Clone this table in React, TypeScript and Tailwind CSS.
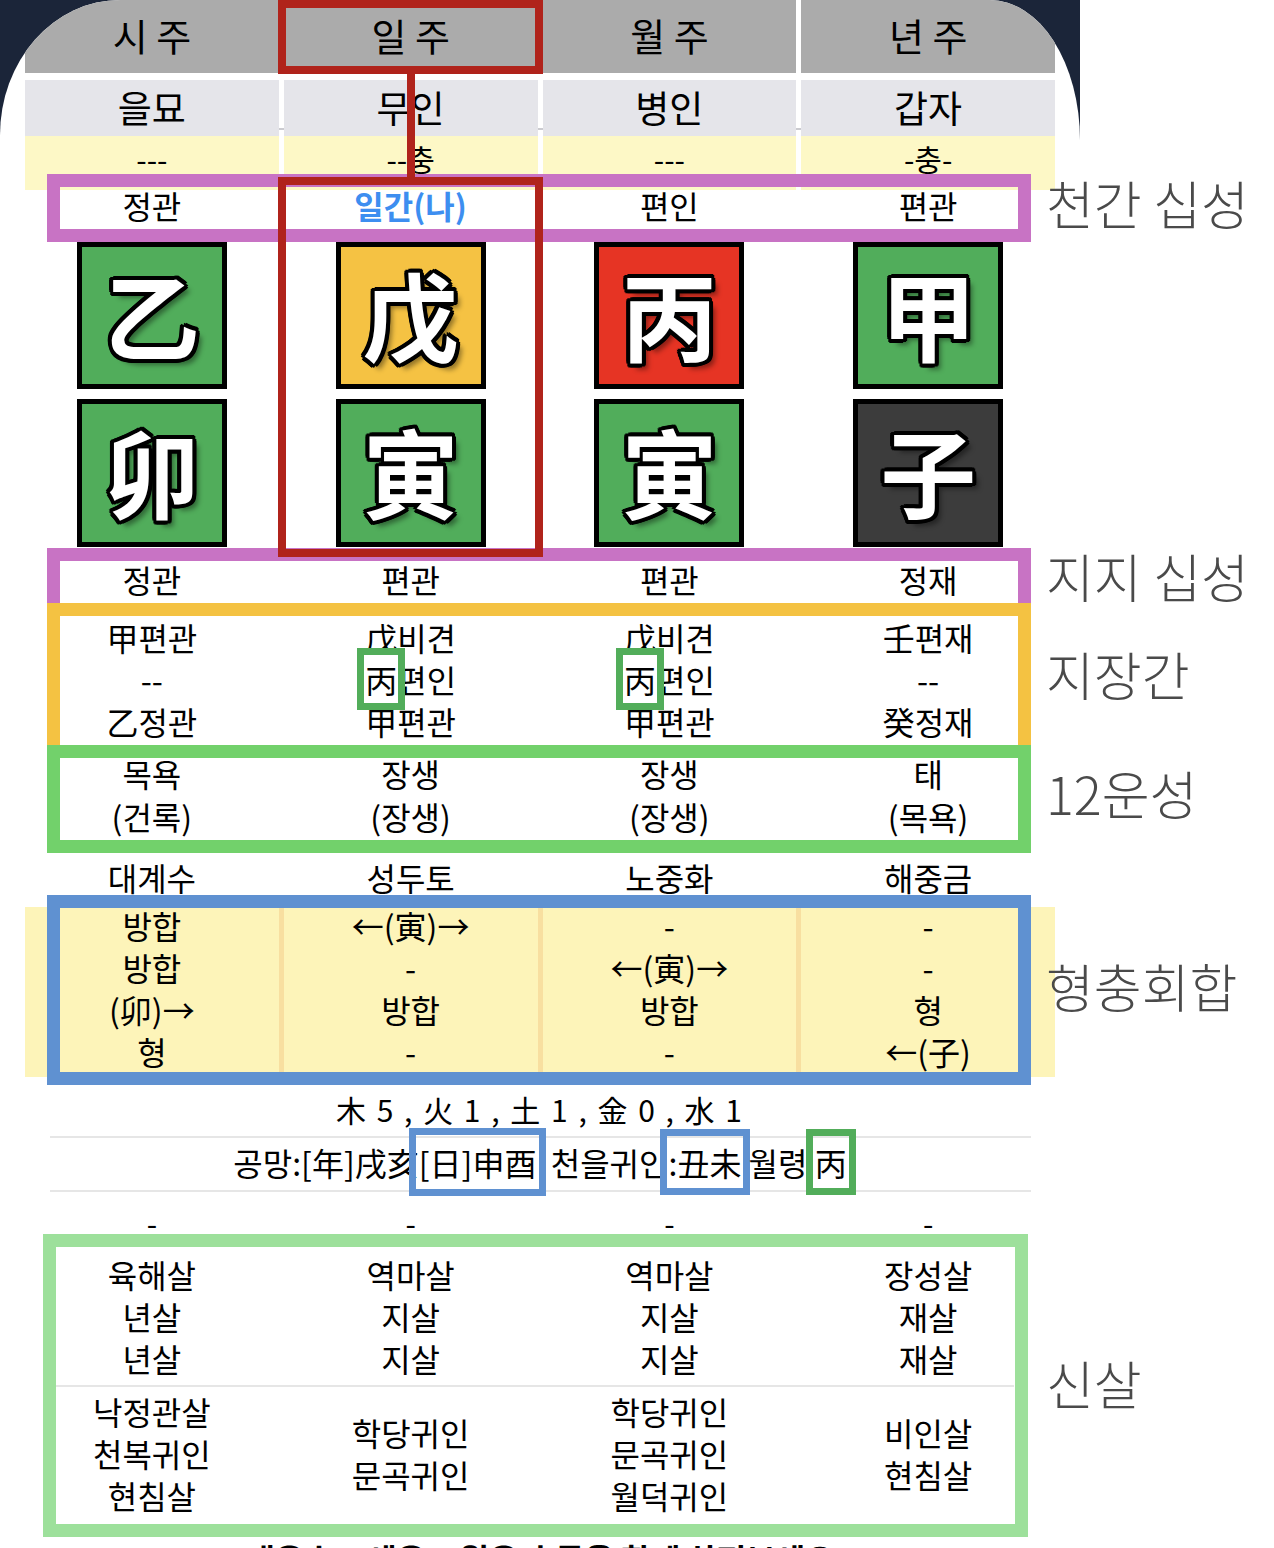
import React from 'react';

const headers = ['시 주', '일 주', '월 주', '년 주'];
const names = ['을묘', '무인', '병인', '갑자'];
const clashes = ['---', '--충', '---', '-충-'];
const stemTen = ['정관', '일간(나)', '편인', '편관'];
const stems = [
  { ch: '乙', bg: 'bg-[#51ad5b]' },
  { ch: '戊', bg: 'bg-[#f5c243]' },
  { ch: '丙', bg: 'bg-[#e63424]' },
  { ch: '甲', bg: 'bg-[#51ad5b]' },
];
const branches = [
  { ch: '卯', bg: 'bg-[#51ad5b]' },
  { ch: '寅', bg: 'bg-[#51ad5b]' },
  { ch: '寅', bg: 'bg-[#51ad5b]' },
  { ch: '子', bg: 'bg-[#3c3c3c]' },
];
const branchTen = ['정관', '편관', '편관', '정재'];
const twelve = [
  ['목욕', '(건록)'],
  ['장생', '(장생)'],
  ['장생', '(장생)'],
  ['태', '(목욕)'],
];
const napeum = ['대계수', '성두토', '노중화', '해중금'];
const relations = [
  ['방합', '방합', '(卯)→', '형'],
  ['←(寅)→', '-', '방합', '-'],
  ['-', '←(寅)→', '방합', '-'],
  ['-', '-', '형', '←(子)'],
];
const shinsalTop = [
  ['육해살', '년살', '년살'],
  ['역마살', '지살', '지살'],
  ['역마살', '지살', '지살'],
  ['장성살', '재살', '재살'],
];
const shinsalBottom = [
  ['낙정관살', '천복귀인', '현침살'],
  ['학당귀인', '문곡귀인'],
  ['학당귀인', '문곡귀인', '월덕귀인'],
  ['비인살', '현침살'],
];

const grid = 'grid grid-cols-4 gap-x-[5px] w-[1030px]';
const outlined =
  '[text-shadow:-3px_-3px_0_#000,3px_-3px_0_#000,-3px_3px_0_#000,3px_3px_0_#000,0_-4px_0_#000,0_4px_0_#000,-4px_0_0_#000,4px_0_0_#000,-4px_-2px_0_#000,4px_2px_0_#000,-2px_4px_0_#000,2px_-4px_0_#000,6px_6px_5px_rgba(0,0,0,0.4)]';

const Tile = ({ ch, bg }: { ch: string; bg: string }) => (
  <div className="flex justify-center">
    <div className={`w-[150px] h-full pb-[6px] border-[5px] border-black flex items-center justify-center ${bg}`}>
      <span className={`text-[96px] leading-none font-bold text-white font-['Noto_Sans_CJK_SC',sans-serif] ${outlined}`}>
        {ch}
      </span>
    </div>
  </div>
);

const Lines = ({ items, lh = 'leading-[42px]' }: { items: string[]; lh?: string }) => (
  <div className={`flex flex-col items-center justify-center ${lh}`}>
    {items.map((t, i) => (
      <div key={i}>{t}</div>
    ))}
  </div>
);

const Boxed = ({ children }: { children: React.ReactNode }) => (
  <span className="outline-[7px] outline-[#52ad5a] outline-offset-[1px]">{children}</span>
);

const Label = ({ text, top }: { text: string; top: string }) => (
  <div className={`absolute left-[1046px] ${top} text-[52px] leading-[54px] font-light text-[#4a4a4a]`}>{text}</div>
);

export default function App() {
  return (
    <div className="relative w-[1274px] h-[1548px] bg-white overflow-hidden text-black font-['Noto_Sans_CJK_KR',sans-serif]">
      <div className="w-[1080px] h-full bg-[#1b2539]">
        <div className="relative h-full bg-white rounded-tl-[120px_135px] rounded-tr-[90px_140px] overflow-hidden">
          <div className="pl-[25px]">
            {/* 기둥 이름 */}
            <div className={`${grid} h-[73px]`}>
              {headers.map((h) => (
                <div key={h} className="bg-[#ababab] pb-[5px] flex items-center justify-center text-[38px]">
                  {h}
                </div>
              ))}
            </div>
            <div className={`${grid} h-[48px] mt-[7px]`}>
              {names.map((n) => (
                <div key={n} className="bg-[#e5e5ea] pb-[12px] flex items-center justify-center text-[37px]">
                  {n}
                </div>
              ))}
            </div>
            <div className="h-[2px] ml-[25px] w-[980px] bg-[#cbcbd0]" />
            <div className={`${grid} h-[44px] mt-[6px]`}>
              {clashes.map((c, i) => (
                <div key={i} className="bg-[#fdf8c6] pb-[9px] flex items-center justify-center text-[30px]">
                  {c}
                </div>
              ))}
            </div>

            {/* 천간 십성 */}
            <div className={`${grid} h-[62px] pb-[12px] text-[32px]`}>
              {stemTen.map((t, i) => (
                <div
                  key={i}
                  className={`flex items-center justify-center ${i === 1 ? 'text-[#3d8ef0] font-bold' : ''}`}
                >
                  {t}
                </div>
              ))}
            </div>

            {/* 원국 */}
            <div className={`${grid} h-[147px]`}>
              {stems.map((s, i) => (
                <Tile key={i} ch={s.ch} bg={s.bg} />
              ))}
            </div>
            <div className={`${grid} h-[148px] mt-[10px]`}>
              {branches.map((s, i) => (
                <Tile key={i} ch={s.ch} bg={s.bg} />
              ))}
            </div>

            {/* 지지 십성 */}
            <div className={`${grid} h-[69px] pb-[5px] text-[32px]`}>
              {branchTen.map((t, i) => (
                <div key={i} className="flex items-center justify-center">
                  {t}
                </div>
              ))}
            </div>

            {/* 지장간 */}
            <div className={`${grid} h-[129px] pb-[10px] text-[32px] leading-[42px]`}>
              <Lines items={['甲편관', '--', '乙정관']} />
              <div className="flex flex-col items-center justify-center">
                <div>戊비견</div>
                <div>
                  <Boxed>丙</Boxed>편인
                </div>
                <div>甲편관</div>
              </div>
              <div className="flex flex-col items-center justify-center">
                <div>戊비견</div>
                <div>
                  <Boxed>丙</Boxed>편인
                </div>
                <div>甲편관</div>
              </div>
              <Lines items={['壬편재', '--', '癸정재']} />
            </div>

            {/* 12운성 */}
            <div className={`${grid} h-[108px] pb-[9px] text-[32px]`}>
              {twelve.map((t, i) => (
                <Lines key={i} items={t} lh="leading-[43px]" />
              ))}
            </div>

            {/* 납음 */}
            <div className={`${grid} h-[42px] pb-[16px] text-[32px]`}>
              {napeum.map((t) => (
                <div key={t} className="flex items-center justify-center">
                  {t}
                </div>
              ))}
            </div>

            {/* 형충회합 */}
            <div className={`${grid} h-[170px] mt-[12px] bg-[#f8dfa0] text-[32px]`}>
              {relations.map((r, i) => (
                <div key={i} className="bg-[#fdf4b9] flex flex-col items-center leading-[42px]">
                  <div className="-mt-[3px] flex flex-col items-center">
                    {r.map((t, j) => (
                      <div key={j}>{t}</div>
                    ))}
                  </div>
                </div>
              ))}
            </div>

            {/* 오행 */}
            <div className="w-[1030px] h-[59px] pt-[6px] flex items-center justify-center text-[30px] tracking-[2px]">
              木 5 , 火 1 , 土 1 , 金 0 , 水 1
            </div>
            <div className="h-[2px] ml-[25px] w-[981px] bg-[#e6e6e6]" />
            <div className="w-[1030px] h-[52px] pb-[4px] flex items-center justify-center text-[32px] whitespace-pre">
              <span>공망:[年]戌亥</span>
              <span className="outline-[7px] outline-[#5f91d1] outline-offset-[3px]">[日]申酉</span>
              <span>  천을귀인</span>
              <span className="outline-[7px] outline-[#5f91d1] outline-offset-[2px]">:丑未</span>
              <span> 월령 </span>
              <span className="outline-[7px] outline-[#52ad5a] outline-offset-[2px]">丙</span>
            </div>
            <div className="h-[2px] ml-[25px] w-[981px] bg-[#e6e6e6]" />

            <div className={`${grid} h-[60px] text-[30px]`}>
              {['-', '-', '-', '-'].map((t, i) => (
                <div key={i} className="flex items-center justify-center">
                  {t}
                </div>
              ))}
            </div>

            {/* 신살 */}
            <div className={`${grid} h-[133px] pb-[6px] text-[32px]`}>
              {shinsalTop.map((t, i) => (
                <Lines key={i} items={t} />
              ))}
            </div>
            <div className="h-[2px] ml-[31px] w-[958px] bg-[#e6e6e6]" />
            <div className={`${grid} h-[137px] pb-[5px] text-[32px]`}>
              {shinsalBottom.map((t, i) => (
                <Lines key={i} items={t} />
              ))}
            </div>
            <div className="h-[2px] ml-[31px] w-[958px] bg-[#e6e6e6]" />
            <div className="w-[1030px] mt-[12px] flex justify-center text-[32px] font-bold leading-[40px]">
              대운수 · 세운 · 월운 흐름을 함께 살펴보세요
            </div>
          </div>

          {/* 표시 테두리 */}
          <div className="absolute left-[47px] top-[174px] w-[984px] h-[68px] border-[13px] border-[#c873c4]" />
          <div className="absolute left-[47px] top-[548px] w-[984px] h-[68px] border-[13px] border-[#c873c4]" />
          <div className="absolute left-[47px] top-[603px] w-[984px] h-[155px] border-[13px] border-[#f4c242]" />
          <div className="absolute left-[47px] top-[745px] w-[984px] h-[108px] border-[13px] border-[#72d16b]" />
          <div className="absolute left-[47px] top-[895px] w-[984px] h-[190px] border-[13px] border-[#5f91d1]" />
          <div className="absolute left-[43px] top-[1234px] w-[985px] h-[303px] border-[13px] border-[#9de09b]" />
          <div className="absolute left-[278px] top-0 w-[265px] h-[74px] border-[8px] border-[#b0231b]" />
          <div className="absolute left-[407px] top-[74px] w-[8px] h-[103px] bg-[#b0231b]" />
          <div className="absolute left-[278px] top-[177px] w-[265px] h-[380px] border-[8px] border-[#b0231b]" />
        </div>
      </div>

      <Label text="천간 십성" top="top-[176px]" />
      <Label text="지지 십성" top="top-[549px]" />
      <Label text="지장간" top="top-[647px]" />
      <Label text="12운성" top="top-[766px]" />
      <Label text="형충회합" top="top-[959px]" />
      <Label text="신살" top="top-[1356px]" />
    </div>
  );
}
